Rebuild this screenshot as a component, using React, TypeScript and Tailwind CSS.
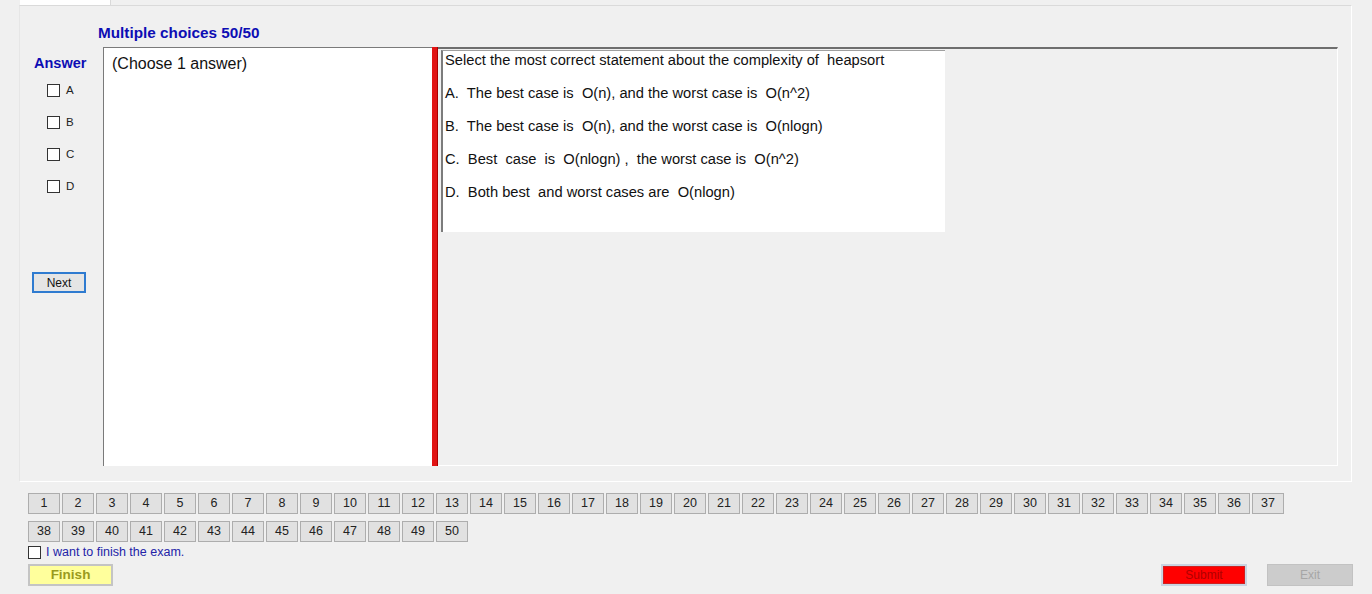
import React from "react";

const options = [
  "A.  The best case is  O(n), and the worst case is  O(n^2)",
  "B.  The best case is  O(n), and the worst case is  O(nlogn)",
  "C.  Best  case  is  O(nlogn) ,  the worst case is  O(n^2)",
  "D.  Both best  and worst cases are  O(nlogn)",
];

const Box = () => (
  <span className="inline-block w-[13px] h-[13px] bg-white border border-[#333333] shrink-0" />
);

const NumButton = ({ n }: { n: number }) => (
  <button className="w-[32px] h-[21px] bg-[#e1e1e1] border border-[#adadad] text-[12.5px] leading-none text-[#222]">
    {n}
  </button>
);

export default function App() {
  const row1 = Array.from({ length: 37 }, (_, i) => i + 1);
  const row2 = Array.from({ length: 13 }, (_, i) => i + 38);

  return (
    <div className="w-[1372px] h-[594px] bg-[#f0f0f0] overflow-hidden font-['Liberation_Sans',Arial,sans-serif] text-black">
      {/* tab strip */}
      <div className="h-[5px] pl-[20px] flex">
        <div className="w-[91px] h-full bg-white border-r border-[#d9d9d9]" />
      </div>

      {/* tab page */}
      <div className="ml-[19px] w-[1333px] h-[477px] border border-t-[#dadada] border-l-[#e6e6e6] border-r-white border-b-white bg-[#f0f0f0] flex flex-col">
        <div className="pl-[78px] pt-[18px] h-[41px] text-[15.3px] leading-[17px] font-bold text-[#0d0db4]">
          Multiple choices 50/50
        </div>

        <div className="flex h-[419px] pl-[12px]">
          {/* answer column */}
          <div className="w-[71px] flex flex-col">
            <div className="pl-[2px] pt-[8px] text-[14.5px] leading-[17px] font-bold text-[#0d0db4]">Answer</div>
            <div className="pl-[15px] pt-[12px] flex flex-col gap-[19px]">
              {["A", "B", "C", "D"].map((l) => (
                <div key={l} className="flex items-center gap-[6px] h-[13px]">
                  <Box />
                  <span className="text-[11.5px] leading-none text-[#222]">{l}</span>
                </div>
              ))}
            </div>
            <button className="mt-[79px] w-[54px] h-[21px] border-2 border-[#2f7bd0] bg-[#e5e5e5] text-[12px] leading-none text-[#111]">
              Next
            </button>
          </div>

          {/* choose box */}
          <div className="w-[329px] h-full bg-white border-t border-l border-[#7a7a7a] pl-[8px] pt-[6px] text-[16px] leading-[19px] text-[#111]">
            (Choose 1 answer)
          </div>

          {/* splitter */}
          <div className="w-[6px] h-full bg-[#e11414] border-r border-[#a00]" />

          {/* question panel */}
          <div className="w-[900px] h-full border-t-2 border-t-[#6e6e6e] border-r border-r-white border-b border-b-white pl-[3px] pt-[1px]">
            <div className="w-[504px] h-[182px] bg-white border-l-2 border-t border-l-[#7c7c7c] border-t-[#a0a0a0] pl-[2px] pt-[1px] text-[14.7px] text-[#111]">
              <div className="leading-[16px] whitespace-pre">Select the most correct statement about the complexity of  heapsort</div>
              {options.map((o) => (
                <div key={o} className="mt-[17px] leading-[16px] whitespace-pre">{o}</div>
              ))}
            </div>
          </div>
        </div>
      </div>

      {/* bottom */}
      <div className="pl-[28px] pt-[11px] pr-[19px]">
        <div className="flex flex-col gap-[7px]">
          <div className="flex gap-[2px]">
            {row1.map((n) => (
              <NumButton key={n} n={n} />
            ))}
          </div>
          <div className="flex gap-[2px]">
            {row2.map((n) => (
              <NumButton key={n} n={n} />
            ))}
          </div>
        </div>
        <div className="mt-[4px] flex items-center gap-[5px] h-[13px]">
          <Box />
          <span className="text-[12.5px] leading-none text-[#2323a8]">I want to finish the exam.</span>
        </div>
        <div className="mt-[5px] flex items-start">
          <button className="w-[85px] h-[22px] bg-[#ffff9c] border-2 border-[#c4c4c4] text-[13.5px] font-bold leading-none text-[#9a9a1e]">
            Finish
          </button>
          <div className="ml-auto flex gap-[20px]">
            <button className="w-[86px] h-[22px] bg-[#ff0000] border-2 border-[#c9d3e0] outline outline-1 -outline-offset-3 outline-[#d02020] text-[12px] leading-none text-[#b00000]">
              Submit
            </button>
            <button className="w-[86px] h-[22px] bg-[#cccccc] border border-[#c2c2c2] text-[12px] leading-none text-[#a6a6a6]">
              Exit
            </button>
          </div>
        </div>
      </div>
    </div>
  );
}
